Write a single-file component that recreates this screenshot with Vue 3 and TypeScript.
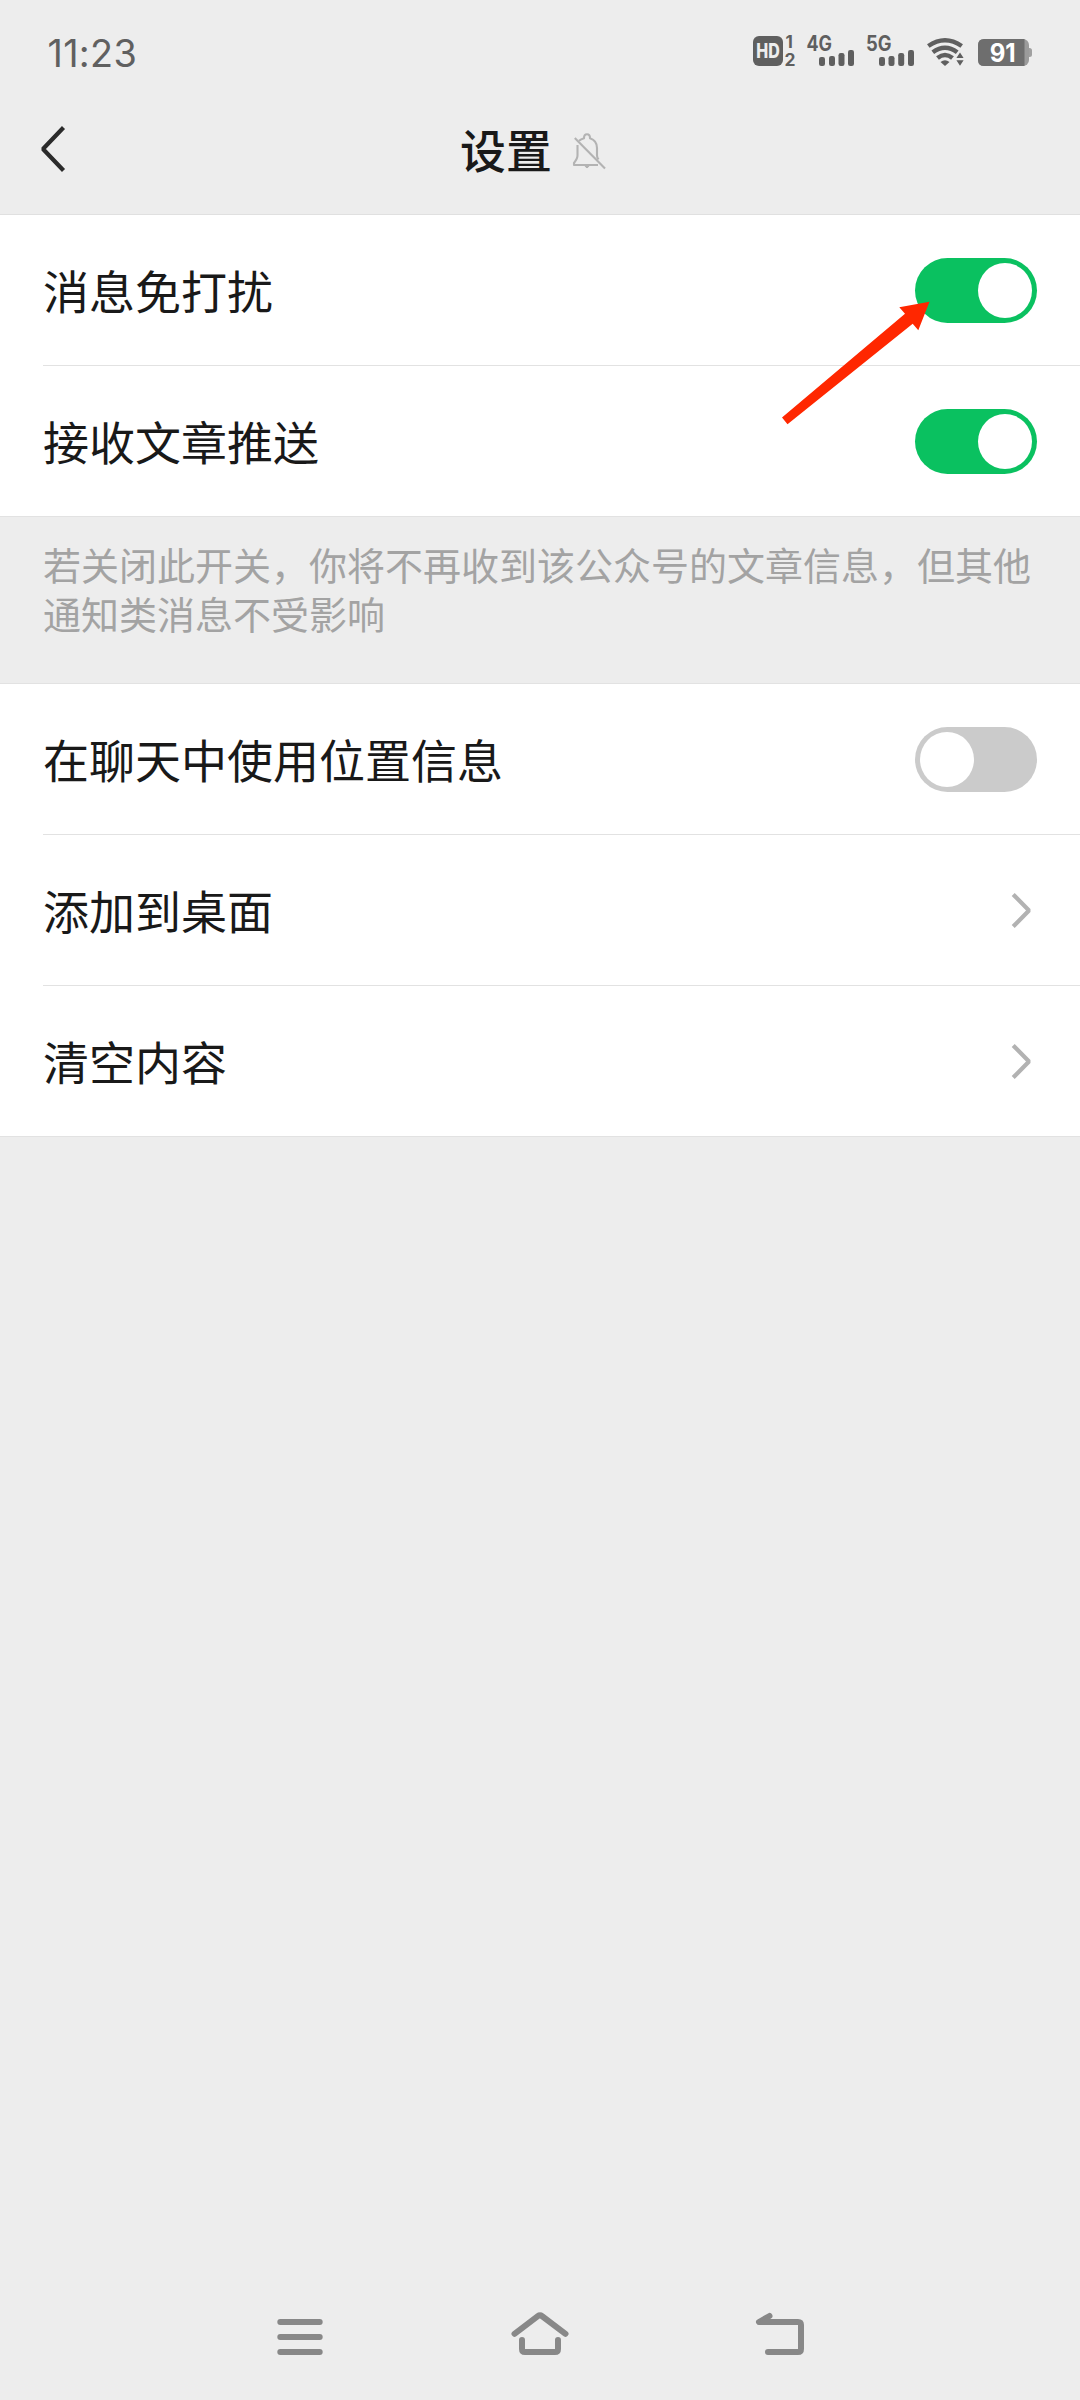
<script setup lang="ts">
import { ref } from 'vue'

interface Row {
  label: string
  kind: 'switch' | 'link'
  on?: boolean
}

const messageRows = ref<Row[]>([
  { label: '消息免打扰', kind: 'switch', on: true },
  { label: '接收文章推送', kind: 'switch', on: true },
])

const otherRows = ref<Row[]>([
  { label: '在聊天中使用位置信息', kind: 'switch', on: false },
  { label: '添加到桌面', kind: 'link' },
  { label: '清空内容', kind: 'link' },
])

const toggle = (row: Row) => {
  if (row.kind === 'switch') row.on = !row.on
}
</script>

<template>
  <div class="screen">
    <header class="status">
      <span class="time">11:23</span>
      <svg class="indicators" width="290" height="40" viewBox="750 32 290 40" fill="#5f5f5f">
        <rect x="753" y="36" width="30" height="30" rx="6" />
        <text x="768" y="57.800" class="hd" text-anchor="middle" textLength="23.500" lengthAdjust="spacingAndGlyphs">HD</text>
        <text x="785.5" y="48" class="sim">1</text>
        <text x="784.5" y="65.5" class="sim" textLength="11" lengthAdjust="spacingAndGlyphs">2</text>
        <text x="806.5" y="51" class="net" textLength="25.500" lengthAdjust="spacingAndGlyphs">4G</text>
        <rect x="819" y="57" width="6" height="9" rx="2.2" />
        <rect x="829" y="56" width="6" height="10" rx="2.2" />
        <rect x="838.5" y="53" width="6" height="13" rx="2.2" />
        <rect x="848" y="50" width="6" height="16" rx="2.2" />
        <text x="866" y="51" class="net" textLength="25.500" lengthAdjust="spacingAndGlyphs">5G</text>
        <rect x="879" y="57" width="6" height="9" rx="2.2" />
        <rect x="888.5" y="56" width="6" height="10" rx="2.2" />
        <rect x="898.2" y="53" width="6" height="13" rx="2.2" />
        <rect x="908" y="50" width="6" height="16" rx="2.2" />
        <g fill="none" stroke="#5f5f5f" stroke-width="4.500">
          <path d="M928.300 46Q945 34.600 961.700 46" />
          <path d="M932.800 52.300Q945 43.200 957.200 52.300" />
          <path d="M937.500 58Q945 52 952.500 58" />
        </g>
        <path d="M940.500 62Q945 58.400 949.500 62L945 66Z" />
        <path d="M956.400 58L960 52.400L963.600 58ZM956.400 60.200H963.600L960 65.800Z" />
        <path d="M1027 48H1029.500Q1032 48 1032 50.500V54.500Q1032 57 1029.500 57H1027Z" fill="#a0a0a0" />
        <rect x="978" y="39" width="51" height="27" rx="6" fill="#9b9b9b" />
        <path d="M984 39H1024.500V66H984Q978 66 978 60V45Q978 39 984 39Z" fill="#6e6e6e" />
        <text x="1002.700" y="62" class="battery" text-anchor="middle" textLength="26" lengthAdjust="spacingAndGlyphs">91</text>
      </svg>
    </header>

    <nav class="bar">
      <svg class="back" width="32" height="52" viewBox="0 0 32 52" fill="none" stroke="#2b2b2b" stroke-width="4.200">
        <path d="M26.500 4.500L6 26L26.500 47.500" stroke-linejoin="bevel" />
      </svg>
      <h1 class="title">设置</h1>
      <svg class="bell" width="36" height="40" viewBox="571 131 36 40" fill="none" stroke="#b3b3b3" stroke-width="2.100" stroke-linejoin="round">
        <path d="M577.500 145V155.500Q577.500 158.500 574 163V165H598" />
        <path d="M579 140.800Q581 139 584 138.200Q584 134.300 587 134.300Q590 134.300 590 138.200Q597 140.500 597 148V155.500Q597 157.500 598.500 159.500" />
        <path d="M574.800 138L605 168.500" />
        <path d="M585 166Q587 169.500 589 166Z" fill="#b3b3b3" stroke-width="1" />
      </svg>
    </nav>

    <main>
      <section class="group">
        <div v-for="row in messageRows" :key="row.label" class="row" @click="toggle(row)">
          <span class="label">{{ row.label }}</span>
          <span class="switch" :class="{ on: row.on }"><i class="knob" /></span>
        </div>
        <svg class="pointer" width="150" height="125" viewBox="781 301 150 125" fill="#ff2700">
          <path d="M929.500 301.700L899.300 307.300L905 313.700L782 417.400L787.500 424.200L912.700 323.700L918.300 330.200Z" />
        </svg>
      </section>

      <p class="note">若关闭此开关，你将不再收到该公众号的文章信息，但其他<br />通知类消息不受影响</p>

      <section class="group">
        <div v-for="row in otherRows" :key="row.label" class="row" @click="toggle(row)">
          <span class="label">{{ row.label }}</span>
          <span v-if="row.kind === 'switch'" class="switch" :class="{ on: row.on }"><i class="knob" /></span>
          <svg v-else class="chevron" width="24" height="40" viewBox="0 0 24 40" fill="none" stroke="#b2b2b2" stroke-width="4.200">
            <path d="M4.200 4.500L20 20.500L4.200 36.500" stroke-linejoin="bevel" />
          </svg>
        </div>
      </section>
    </main>

    <footer class="system">
      <svg width="60" height="60" viewBox="270 2305 60 60">
        <path d="M280.300 2322H319.700M280.300 2337H319.700M280.300 2352H319.700" />
      </svg>
      <svg width="60" height="60" viewBox="510 2305 60 60">
        <path d="M514.500 2333.800L537.800 2316.200Q540 2314.600 542.200 2316.200L565.500 2333.800M522 2340V2349Q522 2352 525 2352H555Q558 2352 558 2349V2340" />
      </svg>
      <svg width="60" height="60" viewBox="750 2305 60 60">
        <path d="M769.500 2316L759 2322H798Q801 2322 801 2325V2349Q801 2352 798 2352H768" />
        <path d="M769.500 2316L759 2322H769.500Z" fill="#888" stroke="none" />
      </svg>
    </footer>
  </div>
</template>

<style>
body {
  margin: 0;
  background: #ededed;
}
</style>

<style scoped>
.screen {
  display: flex;
  flex-direction: column;
  width: 1080px;
  height: 2400px;
  background: #ededed;
  color: #191919;
  font-family: 'Noto Sans CJK SC', sans-serif;
  overflow: hidden;
}
.status {
  display: flex;
  justify-content: space-between;
  box-sizing: border-box;
  height: 90px;
  padding: 32px 40px 0 47.500px;
}
.time {
  color: #606060;
  font: 400 37.800px/43px Inter, sans-serif;
  letter-spacing: 0.300px;
}
.indicators text {
  font-family: Inter, sans-serif;
  font-weight: 700;
}
.indicators .hd {
  fill: #ededed;
  font-size: 19.500px;
  font-weight: 800;
}
.indicators .sim {
  font-size: 17px;
}
.indicators .net {
  font-size: 20.800px;
}
.indicators .battery {
  fill: #fff;
  font-size: 25px;
}
.bar {
  display: flex;
  align-items: center;
  box-sizing: border-box;
  height: 125px;
  padding: 0 0 6px 37px;
  border-bottom: 1px solid #e0e0e0;
}
.title {
  margin: 0 0 3px 391px;
  font-size: 45.900px;
  line-height: 60px;
  font-weight: 500;
}
.bell {
  margin: 3px 0 0 19px;
}
.group {
  position: relative;
  background: #fff;
  border-bottom: 1px solid #e2e2e2;
}
.row {
  display: flex;
  align-items: center;
  justify-content: space-between;
  box-sizing: border-box;
  height: 150px;
  margin-left: 43px;
  padding-right: 43px;
}
.row + .row {
  height: 151px;
  border-top: 1px solid #e2e2e2;
}
.label {
  margin-bottom: 3px;
  font-size: 46px;
  line-height: 60px;
}
.switch {
  box-sizing: border-box;
  display: flex;
  width: 122px;
  height: 65px;
  padding: 5px;
  border-radius: 33px;
  background: #cbcbcb;
}
.switch.on {
  justify-content: flex-end;
  background: #0ac160;
}
.knob {
  width: 54px;
  height: 55px;
  border-radius: 50%;
  background: #fff;
}
.chevron {
  margin-right: 4px;
}
.pointer {
  position: absolute;
  left: 781px;
  top: 86px;
}
.note {
  box-sizing: border-box;
  height: 167px;
  margin: 0;
  padding: 22px 0 0 43px;
  border-bottom: 1px solid #e2e2e2;
  color: #a3a3a3;
  font-size: 38px;
  line-height: 49px;
  white-space: nowrap;
}
.system {
  display: flex;
  justify-content: space-between;
  margin-top: auto;
  padding: 0 270px 35px;
  fill: none;
  stroke: #888;
  stroke-width: 6;
  stroke-linecap: round;
  stroke-linejoin: round;
}
</style>
